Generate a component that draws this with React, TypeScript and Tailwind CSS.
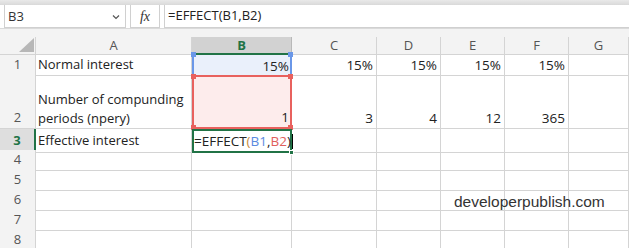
import React from "react";

const GRID = "border-r border-b border-[#d4d4d4]";
const cellFont = { fontFamily: '"Open Sans", "Noto Sans", sans-serif' };

function Handle({ pos, color }: { pos: string; color: string }) {
  return <div className={`absolute w-[5px] h-[5px] ${pos} ${color}`} />;
}

export default function App() {
  const cols = "grid grid-cols-[36px_156px_100px_85px_64px_64px_64px_1fr]";
  const colHeads = ["A", "B", "C", "D", "E", "F", "G"];
  return (
    <div
      className="w-[629px] h-[248px] overflow-hidden bg-white relative text-[#222]"
      style={{ fontFamily: '"Open Sans", "Noto Sans", sans-serif' }}
    >
      {/* top strip */}
      <div className="h-[5px] bg-gradient-to-b from-[#e9e9e9] to-[#d9d9d9]" />
      {/* formula bar */}
      <div className="h-[24px] flex items-stretch border-b border-[#dadada] bg-white">
        <div className="ml-[4px] w-[122px] border border-t-0 border-[#d0d0d0] flex items-center justify-between pl-[3px] pr-[5px]">
          <span className="text-[13px] text-[#333] leading-none">B3</span>
          <svg width="8" height="6" viewBox="0 0 8 6" className="mt-[1px]">
            <path d="M1 1.5 L4 4.5 L7 1.5" fill="none" stroke="#555" strokeWidth="1.2" />
          </svg>
        </div>
        <div className="ml-[4px] w-[30px] border border-t-0 border-[#d0d0d0] flex items-center justify-center">
          <span
            className="italic text-[14px] text-[#333]"
            style={{ fontFamily: '"Liberation Serif", "DejaVu Serif", serif' }}
          >
            fx
          </span>
        </div>
        <div className="ml-[4px] flex-1 border border-t-0 border-r-0 border-[#d0d0d0] flex items-center pl-[3px]">
          <span className="text-[13px] text-[#222]">=EFFECT(B1,B2)</span>
        </div>
      </div>
      {/* grid area */}
      <div className="bg-[#f3f3f3] pt-[8px]">
        <div className={`${cols} h-[18px]`}>
          <div className="relative border-r border-b border-[#d4d4d4] bg-[#f3f3f3]">
            <svg width="16" height="15" viewBox="0 0 16 15" className="absolute left-[19px] top-[1px]">
              <polygon points="15,0 15,14 0,14" fill="#b7b7b7" />
            </svg>
          </div>
          {colHeads.map((c) =>
            c === "B" ? (
              <div
                key={c}
                className="bg-[#d2d2d2] border-r border-[#b8b8b8] border-b-2 border-b-[#217346] flex items-center justify-center text-[13px] font-bold text-[#217346] leading-none"
              >
                {c}
              </div>
            ) : (
              <div
                key={c}
                className="bg-[#f3f3f3] border-r border-b border-[#d4d4d4] flex items-center justify-center text-[13px] text-[#555] leading-none"
              >
                {c}
              </div>
            )
          )}
        </div>
      </div>
      {/* rows */}
      <div className="bg-white" style={cellFont}>
        {/* row 1 */}
        <div className={`${cols} h-[20px] text-[13px]`}>
          <div className="bg-[#f3f3f3] border-r border-b border-[#d4d4d4] flex items-center justify-center text-[13px] text-[#555]">1</div>
          <div className={`${GRID} flex items-center pl-[2px]`}>Normal interest</div>
          <div className="relative bg-[#eaf0fb] border-x-2 border-[#6a97e8] flex items-center justify-end pr-[1px] text-[13.5px]">
            15%
            <Handle pos="-left-[3px] -top-[3px]" color="bg-[#6a97e8]" />
            <Handle pos="-right-[3px] -top-[3px]" color="bg-[#6a97e8]" />
          </div>
          <div className={`${GRID} flex items-center justify-end pr-[3px] text-[13.5px]`}>15%</div>
          <div className={`${GRID} flex items-center justify-end pr-[3px] text-[13.5px]`}>15%</div>
          <div className={`${GRID} flex items-center justify-end pr-[3px] text-[13.5px]`}>15%</div>
          <div className={`${GRID} flex items-center justify-end pr-[3px] text-[13.5px]`}>15%</div>
          <div className={GRID} />
        </div>
        {/* row 2 */}
        <div className={`${cols} h-[54px] text-[13px] leading-[19px]`}>
          <div className="bg-[#f3f3f3] border-r border-b border-[#d4d4d4] flex items-end justify-center text-[13px] text-[#555] pb-[1px]">2</div>
          <div className={`${GRID} flex flex-col justify-end pl-[2px]`}>
            <span>Number of compunding</span>
            <span>periods (npery)</span>
          </div>
          <div className="relative bg-[#fdecec] border-2 border-[#e8615e] flex items-end justify-end pr-[1px] text-[13.5px]">
            1
            <Handle pos="-left-[3px] -top-[3px]" color="bg-[#e8615e]" />
            <Handle pos="-right-[3px] -top-[3px]" color="bg-[#e8615e]" />
            <Handle pos="-left-[3px] -bottom-[3px]" color="bg-[#e8615e]" />
            <Handle pos="-right-[3px] -bottom-[3px]" color="bg-[#e8615e]" />
          </div>
          <div className={`${GRID} flex items-end justify-end pr-[3px] text-[13.5px]`}>3</div>
          <div className={`${GRID} flex items-end justify-end pr-[3px] text-[13.5px]`}>4</div>
          <div className={`${GRID} flex items-end justify-end pr-[3px] text-[13.5px]`}>12</div>
          <div className={`${GRID} flex items-end justify-end pr-[3px] text-[13.5px]`}>365</div>
          <div className={GRID} />
        </div>
        {/* row 3 */}
        <div className={`${cols} h-[21px] text-[13px]`}>
          <div className="bg-[#dedede] border-r-2 border-r-[#217346] border-b border-b-[#c8c8c8] flex items-center justify-center text-[13px] font-bold text-[#217346]">3</div>
          <div className={`${GRID} flex items-center pl-[2px]`}>Effective interest</div>
          <div className="relative border-2 border-[#217346] flex items-center whitespace-nowrap text-[13.5px] overflow-visible">
            <span>=EFFECT</span>
            <span className="text-[#c98a3a]">(</span>
            <span className="text-[#5b8ae0]">B1</span>
            <span>,</span>
            <span className="text-[#e0605c]">B2</span>
            <span>)</span>
            <span className="inline-block w-[1px] h-[15px] bg-black ml-[1px] shrink-0" />
            <div className="absolute -right-[4px] -bottom-[4px] w-[5px] h-[5px] bg-[#217346] border border-white" />
          </div>
          <div className={GRID} />
          <div className={GRID} />
          <div className={GRID} />
          <div className={GRID} />
          <div className={GRID} />
        </div>
        {[4, 5, 6, 7, 8].map((n) => (
          <div key={n} className={`${cols} h-[20px]`}>
            <div className="bg-[#f3f3f3] border-r border-b border-[#d4d4d4] flex items-center justify-center text-[13px] text-[#555]">{n}</div>
            <div className={GRID} />
            <div className={GRID} />
            <div className={GRID} />
            <div className={GRID} />
            <div className={GRID} />
            <div className={GRID} />
            <div className={GRID} />
          </div>
        ))}
      </div>
      {/* watermark */}
      <div
        className="absolute left-[454px] top-[192px] text-[15.5px] text-[#333] leading-[20px]"
        style={{ fontFamily: '"Liberation Sans", Arial, sans-serif' }}
      >
        developerpublish.com
      </div>
    </div>
  );
}
